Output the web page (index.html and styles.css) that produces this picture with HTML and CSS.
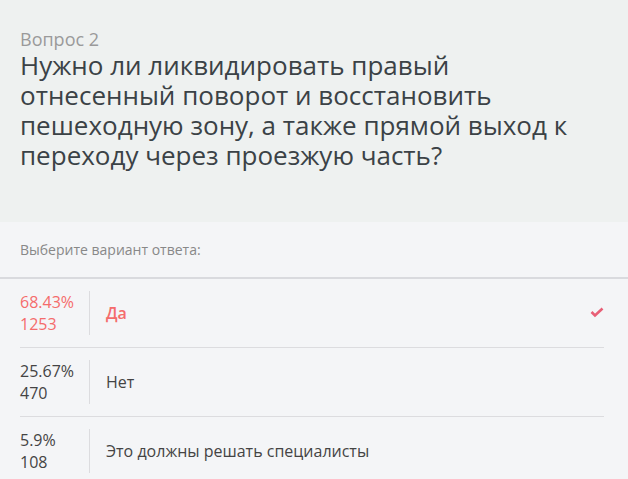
FILE: index.html
```html
<!DOCTYPE html>
<html lang="ru">
<head>
    <meta charset="UTF-8">
    <meta name="viewport" content="width=device-width, initial-scale=1.0">
    <title>Вопрос 2</title>
    <link rel="stylesheet" href="styles.css">
</head>
<body>
    <div class="question">
        <div class="question-num">Вопрос 2</div>
        <h1 class="question-title">Нужно ли ликвидировать правый отнесенный поворот и восстановить пешеходную зону, а также прямой выход к переходу через проезжую часть?</h1>
    </div>

    <div class="answers">
        <div class="answers-hint">Выберите вариант ответа:</div>

        <div class="answer answer-selected">
            <div class="answer-stats">
                <div>68.43%</div>
                <div>1253</div>
            </div>
            <div class="answer-text">Да</div>
            <svg class="answer-check" width="14" height="12" viewBox="0 0 14 12">
                <polyline points="1.5,5 5,8.5 12.5,1.5" fill="none" stroke="#e85f76" stroke-width="2.6"/>
            </svg>
        </div>

        <div class="answer">
            <div class="answer-stats">
                <div>25.67%</div>
                <div>470</div>
            </div>
            <div class="answer-text">Нет</div>
        </div>

        <div class="answer">
            <div class="answer-stats">
                <div>5.9%</div>
                <div>108</div>
            </div>
            <div class="answer-text">Это должны решать специалисты</div>
        </div>
    </div>
</body>
</html>
```

FILE: styles.css
```css
body {
    font-family: "Open Sans", Arial, sans-serif;
    background-color: #f4f5f7;
    color: #444;
    margin: 0;
    padding: 0;
}
.question {
    background-color: #eef1f0;
    padding: 28px 50px 52px 20px;
}
.question-num {
    font-size: 18px;
    line-height: 22px;
    color: #9a9a9a;
}
.question-title {
    margin: 0;
    font-size: 26px;
    font-weight: normal;
    line-height: 30px;
    color: #3b4246;
}
.answers-hint {
    font-size: 14px;
    line-height: 20px;
    color: #888;
    padding: 18px 20px 17px;
    border-bottom: 2px solid #d9dade;
}
.answer {
    display: flex;
    align-items: center;
    margin: 0 24px 0 20px;
    padding: 12px 0;
    border-bottom: 1px solid #dcdcdf;
}
.answer:last-child {
    border-bottom: none;
}
.answer-stats {
    width: 69px;
    font-size: 16px;
    line-height: 22px;
    border-right: 1px solid #dcdcdf;
}
.answer-text {
    flex: 1;
    font-size: 16px;
    padding-left: 16px;
}
.answer-selected {
    color: #f46c6c;
}
.answer-selected .answer-text {
    font-weight: 600;
}
.answer-check {
    display: block;
}
```
